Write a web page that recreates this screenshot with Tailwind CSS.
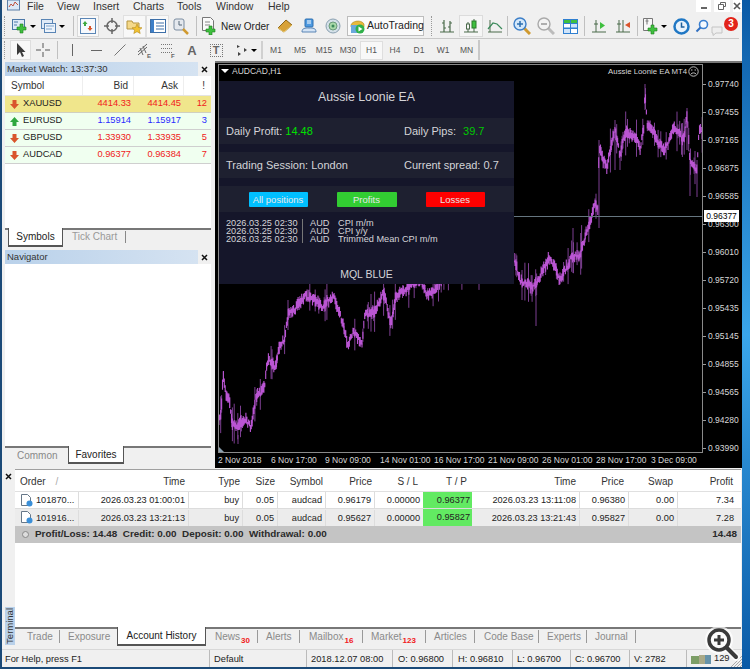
<!DOCTYPE html>
<html lang="en">
<head>
<meta charset="UTF-8">
<title>MetaTrader 4</title>
<script src="https://cdn.jsdelivr.net/npm/@tailwindcss/browser@4"></script>
</head>
<body class="w-[750px] h-[669px] overflow-hidden flex bg-[#0d5ea8] font-['Liberation_Sans',sans-serif] text-[9.500px] text-[#222]">

<!-- Application window -->
<div class="relative w-[742px] h-[669px] border-l-2 border-b-2 border-[#1b4a78] bg-[#f0f0f0] flex flex-col shrink-0">

  <!-- Menu -->
  <div class="h-[14px] flex items-center relative text-[10.500px] leading-[12px] text-[#333]">
    <svg class="ml-[5px] w-[13px] h-[11px] -mt-[3px]" viewBox="0 0 13 11"><rect x=".5" y="0" width="12" height="10" fill="#dbe8f6" stroke="#5b7fa8"/><path d="M2 7l2-3 2 2 2-4 3 3" fill="none" stroke="#c0503c"/></svg>
    <div class="ml-[7px] flex -mt-[3px]">
      <span class="w-[30px]">File</span><span class="w-[36px]">View</span><span class="w-[40px]">Insert</span><span class="w-[44px]">Charts</span><span class="w-[39px]">Tools</span><span class="w-[52px]">Window</span><span>Help</span>
    </div>
    <div class="absolute right-0 top-0 h-[12px] flex gap-[3px]">
      <div class="w-[15px] bg-white flex items-end justify-center pb-[3px]"><div class="w-[6px] h-[2px] bg-[#666]"></div></div>
      <div class="w-[16px] bg-white flex items-center justify-center"><svg class="w-[8px] h-[8px]" viewBox="0 0 8 8"><path d="M2.500 2V.5h5v4H6M.5 2.500h5v5h-5z" fill="none" stroke="#666"/></svg></div>
      <div class="w-[9px] bg-white pl-0 flex items-center"><svg class="w-[8px] h-[8px]" viewBox="0 0 8 8"><path d="M1 1l6 6M7 1L1 7" stroke="#555" stroke-width="1.600"/></svg></div>
    </div>
  </div>

  <!-- Toolbar 1 -->
  <div class="h-[25px] mr-[3px] flex items-center border-b border-[#c8c8c8] text-[10px]">
    <div class="w-[2px] h-[20px] ml-[2px] mr-[4px] border-l border-dotted border-[#999]"></div>
    <div class="w-[20px] flex justify-center"><svg class="w-[16px] h-[16px]" viewBox="0 0 16 16"><rect x=".5" y="1.500" width="12" height="10" fill="#dfeaf7" stroke="#4c78a8"/><path d="M2 4h4M2 7h3" stroke="#4c78a8"/><path d="M8 6h3v3h3v3h-3v3H8v-3H5V9h3z" fill="#3fbf3f" stroke="#1c7f1c" stroke-width=".6"/></svg></div>
    <div class="w-[9px] flex"><div class="border-x-[3px] border-t-[3px] border-x-transparent border-t-black"></div></div>
    <div class="w-[20px] flex justify-center"><svg class="w-[16px] h-[16px]" viewBox="0 0 16 16"><rect x=".5" y="1.500" width="11" height="9" fill="#dfeaf7" stroke="#5a85b5"/><rect x="3.500" y="5.500" width="11" height="9" fill="#eef4fb" stroke="#5a85b5"/><path d="M5 8h8M5 11h6" stroke="#7da3cc"/></svg></div>
    <div class="w-[10px] flex"><div class="border-x-[3px] border-t-[3px] border-x-transparent border-t-black"></div></div>
    <div class="w-[8px] flex justify-center"><div class="w-px h-[20px] bg-[#c0c0c0]"></div></div>
    <div class="w-[22px] h-[22px] flex items-center justify-center bg-[#f8f8f8] border border-[#d8d8d8]"><svg class="w-[16px] h-[16px]" viewBox="0 0 16 16"><rect x=".5" y=".5" width="15" height="15" fill="#f6f9fd" stroke="#5a85b5"/><path d="M5 3l2.500 3H6v2H4V6H2.500z" fill="#3fa83f"/><path d="M10 13l-2.500-3H9V8h2v2h1.500z" fill="#d9552c"/></svg></div>
    <div class="w-[23px] ml-[1px] flex justify-center"><svg class="w-[16px] h-[16px]" viewBox="0 0 16 16"><circle cx="8" cy="8" r="5" fill="none" stroke="#666" stroke-width="1.500"/><path d="M8 0v5M8 11v5M0 8h5M11 8h5" stroke="#666" stroke-width="1.500"/></svg></div>
    <div class="w-[23px] h-[23px] flex items-center justify-center bg-[#f8f8f8] border border-[#e0e0e0]"><svg class="w-[17px] h-[17px]" viewBox="0 0 17 17"><path d="M1 3h5l1 2h6v6H1z" fill="#f5d98a" stroke="#b59540"/><path d="M11 6l1.500 3.500 3.500.3-2.700 2.300.9 3.400-3.200-1.800-3.200 1.800.9-3.400-2.700-2.300 3.500-.3z" fill="#f2c230" stroke="#b58a1c" stroke-width=".6"/></svg></div>
    <div class="w-[23px] h-[23px] flex items-center justify-center bg-[#f8f8f8] border border-[#e0e0e0]"><svg class="w-[16px] h-[16px]" viewBox="0 0 16 16"><rect x=".5" y="1.500" width="15" height="13" fill="#fff" stroke="#3d6fa8"/><rect x="1" y="2" width="3" height="12" fill="#3d7fc8"/><path d="M6 5h8M6 8h8M6 11h8" stroke="#3d6fa8"/></svg></div>
    <div class="w-[24px] flex justify-center"><svg class="w-[18px] h-[18px]" viewBox="0 0 18 18"><rect x="2" y="2" width="10" height="11" rx="2" fill="#e4e8ee" stroke="#7a8ca0"/><path d="M7 4v4h3" stroke="#567" fill="none"/><path d="M11 12l5 5" stroke="#d09a30" stroke-width="2.500"/></svg></div>
    <div class="w-[8px] flex justify-start pl-[3px]"><div class="w-px h-[20px] bg-[#c0c0c0]"></div></div>
    <svg class="w-[17px] h-[18px]" viewBox="0 0 17 18"><path d="M1.500.5h8l3 3v10h-11z" fill="#fafafa" stroke="#777"/><path d="M4 5h5M4 8h5" stroke="#888"/><path d="M8 9h3v3h3v3h-3v3H8v-3H5v-3h3z" fill="#3fbf3f" stroke="#1c7f1c" stroke-width=".6"/></svg>
    <span class="ml-[3px] w-[52px] whitespace-nowrap text-[#222]">New Order</span>
    <div class="w-[24px] flex justify-center"><svg class="w-[16px] h-[14px]" viewBox="0 0 16 14"><path d="M1 9l8-8 6 5-8 7z" fill="#d8a238" stroke="#8c6518"/><path d="M1 9l6 4 8-7" fill="none" stroke="#f1cf74"/></svg></div>
    <div class="w-[24px] flex justify-center"><svg class="w-[16px] h-[16px]" viewBox="0 0 16 16"><rect x="4" y="1" width="8" height="8" rx="1" fill="#4f9ae0" stroke="#2c6fb0"/><path d="M6 3h4M6 5h4" stroke="#fff"/><path d="M1 14c0-4 3-4 7-4s7 0 7 4z" fill="#d4e4f6" stroke="#5a85b5"/></svg></div>
    <div class="w-[24px] flex justify-center"><svg class="w-[16px] h-[16px]" viewBox="0 0 16 16"><circle cx="8" cy="8" r="7" fill="#d4e0e8" stroke="#8aa0b0"/><circle cx="8" cy="8" r="4" fill="#a8d8a8" stroke="#6a9a7a"/><circle cx="8" cy="8" r="1.500" fill="#3c8a5a"/></svg></div>
    <div class="w-[77px] h-[20px] ml-[2px] flex items-center border border-[#bdbdbd] bg-[#fbfbfb]">
      <svg class="w-[15px] h-[15px] ml-[2px] shrink-0" viewBox="0 0 15 15"><path d="M1 6c1-4 10-6 13-1v3H1z" fill="#e8b93c" stroke="#a98420" stroke-width=".6"/><rect x="1" y="6" width="11" height="8" fill="#6aa8dc"/><circle cx="10" cy="10" r="4.500" fill="#2fb04a"/><path d="M8.500 7.500l4 2.500-4 2.500z" fill="#fff"/></svg>
      <span class="ml-[2px] whitespace-nowrap text-[#222] text-[10.500px]">AutoTrading</span>
    </div>
    <div class="w-[2px] h-[20px] ml-[7px] mr-[2px] border-l border-dotted border-[#999]"></div>
    <div class="w-[24px] flex justify-center"><svg class="w-[16px] h-[16px]" viewBox="0 0 16 16"><path d="M1 14h14M5 2v12M3 5h2M5 10h2M11 3v11M9 9h2M11 5h2" stroke="#4a6a4a" fill="none" stroke-width="1.200"/></svg></div>
    <div class="w-[24px] h-[22px] flex items-center justify-center bg-[#f6f6f6] border border-[#dcdcdc]"><svg class="w-[16px] h-[16px]" viewBox="0 0 16 16"><path d="M1 14h14M5 4v10M11 1v13" stroke="#4a6a4a"/><rect x="3.500" y="6" width="3" height="5" fill="#f5f5f5" stroke="#4a6a4a"/><rect x="9" y="3" width="4" height="7" fill="#3fbf3f" stroke="#2a7a2a"/></svg></div>
    <div class="w-[24px] flex justify-center"><svg class="w-[16px] h-[16px]" viewBox="0 0 16 16"><path d="M1 14h14M3 2v12" stroke="#4a6a4a"/><path d="M1 11l5-6 4 1 5 5" fill="none" stroke="#3a8a5a" stroke-width="1.200"/></svg></div>
    <div class="w-[3px] flex"><div class="w-px h-[20px] bg-[#c0c0c0]"></div></div>
    <div class="w-[24px] flex justify-center"><svg class="w-[18px] h-[18px]" viewBox="0 0 18 18"><path d="M11 11l6 6" stroke="#d09a30" stroke-width="3"/><circle cx="7" cy="7" r="6" fill="#d4e8fa" stroke="#3d7fc8" stroke-width="1.400"/><path d="M4 7h6M7 4v6" stroke="#2c6fb0" stroke-width="1.500"/></svg></div>
    <div class="w-[24px] flex justify-center"><svg class="w-[18px] h-[18px]" viewBox="0 0 18 18"><path d="M11 11l6 6" stroke="#bbb" stroke-width="3"/><circle cx="7" cy="7" r="6" fill="#f4f4f4" stroke="#aaa" stroke-width="1.400"/><path d="M4 7h6" stroke="#999" stroke-width="1.500"/></svg></div>
    <div class="w-[24px] flex justify-center"><svg class="w-[15px] h-[15px]" viewBox="0 0 15 15"><rect width="15" height="15" fill="#2f7fd0"/><rect x="1" y="1" width="6" height="3" fill="#3fbf3f"/><rect x="8" y="1" width="6" height="3" fill="#3fbf3f"/><rect x="1" y="5" width="6" height="3.500" fill="#fff"/><rect x="8" y="5" width="6" height="3.500" fill="#cfe4fa"/><rect x="1" y="10" width="6" height="4" fill="#cfe4fa"/><rect x="8" y="10" width="6" height="4" fill="#fff"/></svg></div>
    <div class="w-[5px] flex justify-center"><div class="w-px h-[20px] bg-[#c0c0c0]"></div></div>
    <div class="w-[24px] flex justify-center"><svg class="w-[16px] h-[16px]" viewBox="0 0 16 16"><path d="M1 14h14M5 2v12M3 6h4" stroke="#4a6a4a"/><path d="M9 4l5 3.500L9 11z" fill="#3fbf3f"/></svg></div>
    <div class="w-[24px] flex justify-center"><svg class="w-[16px] h-[16px]" viewBox="0 0 16 16"><path d="M1 14h14M4 2v12M8 2v12M2 6h4" stroke="#4a6a4a"/><path d="M15 4v6l-5-3z" fill="#d9552c"/></svg></div>
    <div class="w-[5px] flex justify-center"><div class="w-px h-[20px] bg-[#c0c0c0]"></div></div>
    <div class="w-[21px] flex justify-center"><svg class="w-[17px] h-[18px]" viewBox="0 0 17 18"><path d="M1.500 1.500h9v12h-9z" fill="#f8f8f8" stroke="#777"/><path d="M5 1.500v6M3.500 4h3" stroke="#777"/><path d="M9 8h3v3h3v3h-3v3H9v-3H6v-3h3z" fill="#3fbf3f" stroke="#1c7f1c" stroke-width=".6"/></svg></div>
    <div class="w-[8px] flex"><div class="border-x-[3px] border-t-[3px] border-x-transparent border-t-black"></div></div>
    <div class="w-[24px] flex justify-center"><svg class="w-[17px] h-[17px]" viewBox="0 0 17 17"><circle cx="8.500" cy="8.500" r="7" fill="#e8f2fb" stroke="#1f77c4" stroke-width="2.500"/><path d="M8.500 4.500v4.500h3" fill="none" stroke="#1f5f9a" stroke-width="1.500"/></svg></div>
    <div class="w-[18px] flex justify-center"><svg class="w-[14px] h-[14px]" viewBox="0 0 14 14"><circle cx="8.500" cy="5.500" r="4" fill="#f4f9ff" stroke="#3a7fd0" stroke-width="1.600"/><path d="M5.500 8.500l-4 4" stroke="#2f6fc0" stroke-width="2"/></svg></div>
    <div class="w-[28px] relative flex justify-end pr-[1px] h-[20px]">
      <svg class="absolute left-0 bottom-0 w-[12px] h-[10px]" viewBox="0 0 12 10"><path d="M1 1h10v6H5L2 9.500V7H1z" fill="#eee" stroke="#c4c4c4"/></svg>
      <div class="w-[14px] h-[14px] mt-[1px] rounded-full bg-[#e2231a] text-white text-[10px] font-bold leading-[14px] text-center">3</div>
    </div>
  </div>

  <!-- Toolbar 2 -->
  <div class="h-[22px] flex items-center text-[#555]">
    <div class="w-[2px] h-[18px] ml-[2px] mr-[4px] border-l border-dotted border-[#999]"></div>
    <div class="w-[21px] h-[20px] flex items-center justify-center bg-[#f8f8f8] border border-[#dedede]"><svg class="w-[11px] h-[14px]" viewBox="0 0 11 14"><path d="M2 0v12l3-3 2 5 2-1-2-4h3.500z" fill="#3a3a3a"/></svg></div>
    <div class="w-[24px] flex justify-center"><svg class="w-[14px] h-[14px]" viewBox="0 0 14 14"><path d="M7 0v5M7 9v5M0 7h5M9 7h5" stroke="#555"/></svg></div>
    <div class="w-[5px] flex justify-center"><div class="w-px h-[18px] bg-[#c0c0c0]"></div></div>
    <div class="w-[24px] flex justify-center"><div class="w-px h-[12px] bg-[#666]"></div></div>
    <div class="w-[24px] flex justify-center"><div class="w-[11px] h-px bg-[#666]"></div></div>
    <div class="w-[24px] flex justify-center"><svg class="w-[12px] h-[12px]" viewBox="0 0 12 12"><path d="M.5 11.500l11-11" stroke="#777"/></svg></div>
    <div class="w-[24px] flex justify-center"><svg class="w-[15px] h-[15px]" viewBox="0 0 15 15"><path d="M1 9l9-8M1 12l9-8M3 5l3 7M6 3l3 7" stroke="#666" fill="none"/><text x="10" y="14.500" font-size="6" font-weight="700" fill="#666" font-family="Liberation Sans">E</text></svg></div>
    <div class="w-[24px] flex justify-center"><svg class="w-[15px] h-[15px]" viewBox="0 0 15 15"><path d="M0 1.500h12M0 5.500h12M0 9.500h12" stroke="#777" stroke-dasharray="1 1"/><text x="10" y="15" font-size="6" font-weight="700" fill="#666" font-family="Liberation Sans">F</text></svg></div>
    <div class="w-[24px] text-center text-[13px] font-bold text-[#666] leading-none">A</div>
    <div class="w-[24px] flex justify-center"><div class="w-[13px] h-[13px] border border-dotted border-[#777] text-center text-[11px] font-bold leading-[11px] text-[#666]">T</div></div>
    <div class="w-[30px] flex items-center pl-[8px]"><svg class="w-[13px] h-[12px]" viewBox="0 0 13 12"><path d="M1 1l3 1.500L1 4zM8 4l3 2-3 2zM2 8l3 2-3 2z" fill="#444"/></svg><div class="ml-[2px] border-x-[3px] border-t-[3px] border-x-transparent border-t-black"></div></div>
    <div class="w-[6px] flex"><div class="w-[2px] h-[18px] ml-[3px] bg-[#d0d0d0]"></div></div>
    <div class="flex text-[8.500px] text-center items-center">
      <span class="w-[24px]">M1</span><span class="w-[24px]">M5</span><span class="w-[24px]">M15</span><span class="w-[24px]">M30</span><span class="w-[23px] h-[19px] leading-[17px] bg-[#f8f8f8] border border-[#dedede]">H1</span><span class="w-[24px]">H4</span><span class="w-[24px]">D1</span><span class="w-[24px]">W1</span><span class="w-[23px]">MN</span>
    </div>
    <div class="w-[2px] h-[20px] bg-[#c8c8c8]"></div>
  </div>

  <!-- Middle: side panels and chart -->
  <div class="h-[407px] flex">
    <div class="w-[213px] pl-[3px] pr-[4px] pt-[1px] flex flex-col">

      <!-- Market Watch -->
      <div class="h-[183px] flex flex-col">
        <div class="h-[14px] flex items-center pl-[2px] bg-gradient-to-r from-[#b9d1ea] to-[#d7e4f2] text-[#333] leading-none">
          <span>Market Watch: 13:37:30</span>
          <div class="ml-auto w-[13px] h-full bg-[#f0f0f0] flex items-center justify-center"><svg class="w-[7px] h-[7px]" viewBox="0 0 7 7"><path d="M1 1l5 5M6 1L1 6" stroke="#111" stroke-width="1.500"/></svg></div>
        </div>
        <div class="h-[152px] bg-white text-[9.300px]">
          <div class="h-[20px] grid grid-cols-[78px_51px_50px_27px] items-center border-b border-[#e4e4e4] text-[10px] text-[#333]">
            <div class="pl-[6px] h-full leading-[19px] border-r border-[#eee]">Symbol</div><div class="text-right pr-[5px] h-full leading-[19px] border-r border-[#eee]">Bid</div><div class="text-right pr-[5px] h-full leading-[19px] border-r border-[#eee]">Ask</div><div class="text-right pr-[6px]">!</div>
          </div>
          <div class="h-[17px] grid grid-cols-[78px_51px_50px_27px] items-center bg-[#f0e68c] border-b border-[#d0d0c0] text-[#f02020]">
            <div class="flex items-center pl-[5px] text-[#222]"><svg class="w-[9px] h-[9px] mr-[4px]" viewBox="0 0 9 9"><path d="M2.500 0h4v4H9L4.500 9 0 4h2.500z" fill="#d9552c"/></svg>XAUUSD</div><div class="text-right pr-[3px]">4414.33</div><div class="text-right pr-[3px]">4414.45</div><div class="text-right pr-[4px]">12</div>
          </div>
          <div class="h-[17px] grid grid-cols-[78px_51px_50px_27px] items-center bg-[#f0fff0] border-b border-[#cfcfcf] text-[#2a2aff]">
            <div class="flex items-center pl-[5px] text-[#222]"><svg class="w-[9px] h-[9px] mr-[4px]" viewBox="0 0 9 9"><path d="M2.500 9h4V5H9L4.500 0 0 5h2.500z" fill="#2fa83f"/></svg>EURUSD</div><div class="text-right pr-[3px]">1.15914</div><div class="text-right pr-[3px]">1.15917</div><div class="text-right pr-[4px]">3</div>
          </div>
          <div class="h-[17px] grid grid-cols-[78px_51px_50px_27px] items-center bg-[#f0fff0] border-b border-[#cfcfcf] text-[#f02020]">
            <div class="flex items-center pl-[5px] text-[#222]"><svg class="w-[9px] h-[9px] mr-[4px]" viewBox="0 0 9 9"><path d="M2.500 0h4v4H9L4.500 9 0 4h2.500z" fill="#d9552c"/></svg>GBPUSD</div><div class="text-right pr-[3px]">1.33930</div><div class="text-right pr-[3px]">1.33935</div><div class="text-right pr-[4px]">5</div>
          </div>
          <div class="h-[17px] grid grid-cols-[78px_51px_50px_27px] items-center bg-[#f0fff0] border-b border-[#cfcfcf] text-[#f02020]">
            <div class="flex items-center pl-[5px] text-[#222]"><svg class="w-[9px] h-[9px] mr-[4px]" viewBox="0 0 9 9"><path d="M2.500 0h4v4H9L4.500 9 0 4h2.500z" fill="#d9552c"/></svg>AUDCAD</div><div class="text-right pr-[3px]">0.96377</div><div class="text-right pr-[3px]">0.96384</div><div class="text-right pr-[4px]">7</div>
          </div>
        </div>
        <div class="h-[17px] flex border-t-2 border-[#777] text-[10px] text-[#888]">
          <div class="w-[55px] ml-[3px] -mt-[2px] h-[19px] bg-white border-x border-b-2 border-[#555] text-[#222] text-center leading-[17px]">Symbols</div>
          <div class="ml-[9px] pr-[8px] border-r border-[#888] my-[1px] leading-[12px] h-[12px] text-[#999]">Tick Chart</div>
        </div>
      </div>

      <!-- Navigator -->
      <div class="mt-[5px] h-[14px] flex items-center pl-[2px] bg-gradient-to-r from-[#b9d1ea] to-[#d7e4f2] text-[#333] leading-none">
        <span>Navigator</span>
        <div class="ml-auto w-[13px] h-full bg-[#f0f0f0] flex items-center justify-center"><svg class="w-[7px] h-[7px]" viewBox="0 0 7 7"><path d="M1 1l5 5M6 1L1 6" stroke="#111" stroke-width="1.500"/></svg></div>
      </div>
      <div class="h-[182px] bg-white"></div>
      <div class="h-[17px] flex border-t-2 border-[#777] text-[10px]">
        <div class="w-[63px] pl-[12px] text-[#888] leading-[15px]">Common</div>
        <div class="w-[56px] -mt-[2px] h-[18px] bg-white border-x border-b-2 border-[#555] text-[#222] text-center leading-[17px]">Favorites</div>
      </div>
    </div>

    <!-- Chart window -->
    <div class="w-[527px] h-[407px] bg-black border-t-2 border-[#777] pl-[3px] pt-[1px] relative text-[8.500px] text-[#d8d8d8] leading-none">
      <div class="flex">
        <div id="plot" class="relative w-[485px] h-[389px] border border-[#8a8a8a] overflow-hidden">
          <svg id="chartSvg" class="absolute left-0 top-0 w-full h-full" viewBox="219 65 483 387"></svg>
          <div class="absolute left-0 right-0 top-[151px] h-px bg-[#65757f]"></div>
          <div class="absolute left-[2px] top-[2px] flex items-center gap-[3px]"><div class="border-x-[4px] border-t-[4px] border-x-transparent border-t-white"></div><span>AUDCAD,H1</span></div>
          <div class="absolute right-[3px] top-[1px] flex items-center text-[7.800px] gap-[1px]"><span>Aussie Loonie EA MT4</span><svg class="w-[11px] h-[11px]" viewBox="0 0 11 11"><circle cx="5.500" cy="5.500" r="4.700" fill="none" stroke="#bbb"/><circle cx="3.800" cy="4" r=".7" fill="#bbb"/><circle cx="7.200" cy="4" r=".7" fill="#bbb"/><path d="M3 8c1-1.500 4-1.500 5 0" fill="none" stroke="#bbb"/></svg></div>

          <!-- EA dashboard -->
          <div class="absolute left-0 top-[16px] w-[295px] h-[203px] bg-[#15162a] flex flex-col text-[11px] text-[#d4d4d8]">
            <div class="h-[37px] pb-[4px] flex items-center justify-center text-[12.300px]">Aussie Loonie EA</div>
            <div class="h-[26px] flex items-center bg-[#1e2030]">
              <span class="ml-[7px] w-[178px]">Daily Profit: <span class="text-[#00e000]">14.48</span></span>
              <span>Daily Pips: <span class="ml-[4px] text-[#00c800]">39.7</span></span>
            </div>
            <div class="mt-[8px] h-[26px] flex items-center bg-[#1e2030]">
              <span class="ml-[7px] w-[178px]">Trading Session: London</span>
              <span>Current spread: 0.7</span>
            </div>
            <div class="mt-[8px] h-[26px] flex items-center justify-center gap-[29px] bg-[#1e2030] text-[9.500px] text-[#e8e8e8] text-center">
              <div class="w-[59px] h-[15px] leading-[15px] rounded-[1px] bg-[#00bfff]">All positions</div>
              <div class="w-[60px] h-[15px] leading-[15px] rounded-[1px] bg-[#32cd32]">Profits</div>
              <div class="w-[59px] h-[15px] leading-[15px] rounded-[1px] bg-[#ff0000]">Losses</div>
            </div>
            <div class="mt-[7px] ml-[7px] grid grid-cols-[77px_35px_auto] text-[9.200px] leading-[8px] whitespace-nowrap">
              <div class="border-r border-[#777]"><div>2026.03.25 02:30</div><div>2026.03.25 02:30</div><div>2026.03.25 02:30</div></div>
              <div class="pl-[7px]"><div>AUD</div><div>AUD</div><div>AUD</div></div>
              <div><div>CPI m/m</div><div>CPI y/y</div><div>Trimmed Mean CPI m/m</div></div>
            </div>
            <div class="mt-auto h-[15px] text-center text-[10.500px]">MQL BLUE</div>
          </div>
          <!-- corner marker -->
          <div class="absolute left-0 bottom-0 border-r-[5px] border-b-[5px] border-r-transparent border-b-[#8aa0b0]"></div>
        </div>

        <!-- Price axis -->
        <div class="relative w-[39px] h-[389px]">
          <div class="flex flex-col pt-[6px]">
            <div class="h-[28px] flex items-center"><span class="w-[3px] h-px bg-[#999] mr-[2px]"></span>0.97740</div>
            <div class="h-[28px] flex items-center"><span class="w-[3px] h-px bg-[#999] mr-[2px]"></span>0.97455</div>
            <div class="h-[28px] flex items-center"><span class="w-[3px] h-px bg-[#999] mr-[2px]"></span>0.97165</div>
            <div class="h-[28px] flex items-center"><span class="w-[3px] h-px bg-[#999] mr-[2px]"></span>0.96875</div>
            <div class="h-[28px] flex items-center"><span class="w-[3px] h-px bg-[#999] mr-[2px]"></span>0.96585</div>
            <div class="h-[28px] flex items-center"><span class="w-[3px] h-px bg-[#999] mr-[2px]"></span>0.96300</div>
            <div class="h-[28px] flex items-center"><span class="w-[3px] h-px bg-[#999] mr-[2px]"></span>0.96010</div>
            <div class="h-[28px] flex items-center"><span class="w-[3px] h-px bg-[#999] mr-[2px]"></span>0.95720</div>
            <div class="h-[28px] flex items-center"><span class="w-[3px] h-px bg-[#999] mr-[2px]"></span>0.95435</div>
            <div class="h-[28px] flex items-center"><span class="w-[3px] h-px bg-[#999] mr-[2px]"></span>0.95145</div>
            <div class="h-[28px] flex items-center"><span class="w-[3px] h-px bg-[#999] mr-[2px]"></span>0.94855</div>
            <div class="h-[28px] flex items-center"><span class="w-[3px] h-px bg-[#999] mr-[2px]"></span>0.94565</div>
            <div class="h-[28px] flex items-center"><span class="w-[3px] h-px bg-[#999] mr-[2px]"></span>0.94280</div>
            <div class="h-[28px] flex items-center"><span class="w-[3px] h-px bg-[#999] mr-[2px]"></span>0.93990</div>
          </div>
          <div class="absolute left-[1px] top-[146px] w-[35px] h-[12px] bg-white text-black text-center leading-[12px]">0.96377</div>
        </div>
      </div>
      <!-- Time axis -->
      <div class="grid grid-cols-[53px_54px_55px_54px_54px_54px_54px_55px_54px] h-[14px] pt-[3px] whitespace-nowrap">
        <span>2 Nov 2018</span><span>6 Nov 17:00</span><span>9 Nov 09:00</span><span>14 Nov 01:00</span><span>16 Nov 17:00</span><span>21 Nov 09:00</span><span>26 Nov 01:00</span><span>28 Nov 17:00</span><span>3 Dec 09:00</span>
      </div>
    </div>
  </div>

  <!-- Terminal -->
  <div class="h-[180px] flex mt-[1px]">
    <div class="w-[13px] pl-[3px] flex flex-col">
      <svg class="w-[7px] h-[7px] mt-[4px]" viewBox="0 0 7 7"><path d="M1 1l5 5M6 1L1 6" stroke="#111" stroke-width="1.500"/></svg>
      <div class="mt-auto mb-[4px] w-[10px] h-[38px] bg-[#b9d1ea] text-[#333] flex items-center justify-center">
        <span class="[writing-mode:vertical-rl] rotate-180 text-[9.500px] leading-none">Terminal</span>
      </div>
    </div>
    <div class="w-[726px] flex flex-col">
      <div class="h-[158px] pt-[2px] bg-white border-t border-[#a0a0a0] text-[9.200px]">
        <div class="h-[20px] grid grid-cols-[64px_110px_54px_35px_48px_49px_48px_49px_108px_49px_49px_60px] items-center text-right text-[10px] text-[#333] border-b border-[#e0e0e0]">
          <div class="text-left pl-[5px] flex">Order<span class="ml-[10px] text-[#aaa]">/</span></div><div class="pr-[4px]">Time</div><div class="pr-[3px]">Type</div><div class="pr-[3px]">Size</div><div class="pr-[3px]">Symbol</div><div class="pr-[3px]">Price</div><div class="pr-[5px]">S / L</div><div class="pr-[5px]">T / P</div><div class="pr-[4px]">Time</div><div class="pr-[5px]">Price</div><div class="pr-[5px]">Swap</div><div class="pr-[5px]">Profit</div>
        </div>
        <div class="h-[17px] grid grid-cols-[64px_110px_54px_35px_48px_49px_48px_49px_108px_49px_49px_60px] items-center text-right border-b border-[#dcdcdc] leading-[16px]">
          <div class="text-left pl-[5px] flex items-center gap-[3px] border-r border-[#ddd]"><svg class="w-[13px] h-[13px]" viewBox="0 0 13 13"><path d="M1.500.5h6l3 3v8h-9z" fill="#fff" stroke="#678"/><circle cx="9.500" cy="9.500" r="3" fill="#3a8fd8"/></svg>101870...</div><div class="pr-[3px] border-r border-[#ddd]">2026.03.23 01:00:01</div><div class="pr-[3px] border-r border-[#ddd]">buy</div><div class="pr-[3px] border-r border-[#ddd]">0.05</div><div class="pr-[3px] border-r border-[#ddd]">audcad</div><div class="pr-[3px] border-r border-[#ddd]">0.96179</div><div class="pr-[3px]">0.00000</div><div class="pr-[2px] h-full bg-[#62ea62]">0.96377</div><div class="pr-[3px] border-r border-[#ddd]">2026.03.23 13:11:08</div><div class="pr-[3px] border-r border-[#ddd]">0.96380</div><div class="pr-[3px] border-r border-[#ddd]">0.00</div><div class="pr-[4px]">7.34</div>
        </div>
        <div class="h-[17px] grid grid-cols-[64px_110px_54px_35px_48px_49px_48px_49px_108px_49px_49px_60px] items-center text-right bg-[#ececec] leading-[16px]">
          <div class="text-left pl-[5px] flex items-center gap-[3px] border-r border-[#ddd]"><svg class="w-[13px] h-[13px]" viewBox="0 0 13 13"><path d="M1.500.5h6l3 3v8h-9z" fill="#fff" stroke="#678"/><circle cx="9.500" cy="9.500" r="3" fill="#3a8fd8"/></svg>101916...</div><div class="pr-[3px] border-r border-[#ddd]">2026.03.23 13:21:13</div><div class="pr-[3px] border-r border-[#ddd]">buy</div><div class="pr-[3px] border-r border-[#ddd]">0.05</div><div class="pr-[3px] border-r border-[#ddd]">audcad</div><div class="pr-[3px] border-r border-[#ddd]">0.95627</div><div class="pr-[3px]">0.00000</div><div class="pr-[2px] h-full bg-[#62ea62]">0.95827</div><div class="pr-[3px] border-r border-[#ddd]">2026.03.23 13:21:43</div><div class="pr-[3px] border-r border-[#ddd]">0.95827</div><div class="pr-[3px] border-r border-[#ddd]">0.00</div><div class="pr-[4px]">7.28</div>
        </div>
        <div class="h-[17px] flex items-center bg-[#c4c4c4] font-bold text-[9.900px] text-[#2a2a2a] pl-[7px] pr-[4px]">
          <svg class="w-[7px] h-[7px] mr-[6px]" viewBox="0 0 7 7"><circle cx="3.500" cy="3.500" r="3" fill="#ddd" stroke="#888"/></svg>
          <span>Profit/Loss: 14.48&nbsp; Credit: 0.00&nbsp; Deposit: 0.00&nbsp; Withdrawal: 0.00</span>
          <span class="ml-auto">14.48</span>
        </div>
      </div>
      <!-- Terminal tabs -->
      <div class="h-[20px] flex border-t-2 border-[#777] text-[10px] leading-[13px] text-[#8a8a8a] whitespace-nowrap">
        <div class="w-[45px] pl-[12px] mt-[1px] h-[13px] border-r border-[#999]">Trade</div>
        <div class="w-[57px] pl-[8px] mt-[1px] h-[13px]">Exposure</div>
        <div class="w-[89px] -mt-[2px] h-[19px] bg-white border-x border-b-2 border-[#555] text-[#222] text-center leading-[17px]">Account History</div>
        <div class="w-[52px] pl-[9px] mt-[1px] h-[13px] border-r border-[#999]">News<span class="ml-[1px] relative top-[3px] text-[8px] text-[#f02020] font-bold">30</span></div>
        <div class="w-[42px] pl-[8px] mt-[1px] h-[13px] border-r border-[#999]">Alerts</div>
        <div class="w-[63px] pl-[9px] mt-[1px] h-[13px] border-r border-[#999]">Mailbox<span class="ml-[1px] relative top-[3px] text-[8px] text-[#f02020] font-bold">16</span></div>
        <div class="w-[63px] pl-[8px] mt-[1px] h-[13px] border-r border-[#999]">Market<span class="ml-[1px] relative top-[3px] text-[8px] text-[#f02020] font-bold">123</span></div>
        <div class="w-[49px] pl-[8px] mt-[1px] h-[13px] border-r border-[#999]">Articles</div>
        <div class="w-[64px] pl-[9px] mt-[1px] h-[13px] border-r border-[#999]">Code Base</div>
        <div class="w-[48px] pl-[8px] mt-[1px] h-[13px] border-r border-[#999]">Experts</div>
        <div class="w-[49px] pl-[8px] mt-[1px] h-[13px] border-r border-[#999]">Journal</div>
      </div>
    </div>
  </div>

  <!-- Status bar -->
  <div class="h-[18px] flex items-center border-t border-[#d8d8d8] whitespace-nowrap text-[9.300px]">
    <div class="w-[208px] pl-[3px] border-r border-[#bbb] h-full leading-[18px]">For Help, press F1</div>
    <div class="w-[97px] pl-[4px] border-r border-[#bbb] h-full leading-[18px]">Default</div>
    <div class="w-[86px] pl-[4px] border-r border-[#bbb] h-full leading-[18px]">2018.12.07 08:00</div>
    <div class="w-[60px] pl-[5px] border-r border-[#bbb] h-full leading-[18px]">O: 0.96800</div>
    <div class="w-[60px] pl-[5px] border-r border-[#bbb] h-full leading-[18px]">H: 0.96810</div>
    <div class="w-[58px] pl-[4px] border-r border-[#bbb] h-full leading-[18px]">L: 0.96700</div>
    <div class="w-[59px] pl-[4px] border-r border-[#bbb] h-full leading-[18px]">C: 0.96700</div>
    <div class="w-[57px] pl-[4px] border-r border-[#bbb] h-full leading-[18px]">V: 2782</div>
    <div class="flex-1 flex items-center pl-[4px] overflow-hidden h-full">
      <svg class="w-[20px] h-[11px] shrink-0" viewBox="0 0 20 11"><path d="M1 11V3M3 11V3M5 11V3M7 11V3" stroke="#4a7a2a" stroke-width="1.400"/><path d="M9 11V2M11 11V2M13 11V2" stroke="#8a8a5a" stroke-width="1.400"/><path d="M15 11V2M17 11V2M19 11V2" stroke="#2a6a8a" stroke-width="1.400"/></svg>
      <span class="ml-[3px] shrink-0">129</span>
    </div>
  </div>

  <!-- resize grip -->
  <svg class="absolute right-0 bottom-0 w-[12px] h-[12px]" viewBox="0 0 12 12"><path d="M12 1L1 12M12 4l-8 8M12 7l-5 5M12 10l-2 2" stroke="#aaa"/></svg>
  <!-- zoom cursor overlay -->
  <svg class="absolute left-[702px] top-[625px] w-[36px] h-[36px]" viewBox="0 0 36 36">
    <path d="M22 22l11 11" stroke="#fff" stroke-width="7" stroke-linecap="round" stroke-opacity=".7"/>
    <circle cx="15" cy="15" r="11" fill="#fff" fill-opacity=".7" stroke="#fff" stroke-opacity=".7" stroke-width="6"/>
    <path d="M23 23l9 9" stroke="#3a3a3a" stroke-width="4" stroke-linecap="round"/>
    <circle cx="15" cy="15" r="10" fill="none" stroke="#3a3a3a" stroke-width="3.500"/>
    <path d="M10 15h10M15 10v10" stroke="#3a3a3a" stroke-width="3"/>
  </svg>
</div>

<!-- Desktop behind the window -->
<div class="flex-1 h-[669px] bg-gradient-to-b from-[#0a5aa6] via-[#3aa6ea] to-[#0a5aa6]"></div>

<script>
  // price path in page coordinates, filled out with seeded noise
  const pts = [[218,420],[221,415],[223,375],[226,395],[229,399],[232,423],[239,425],[246,420],[251,428],[256,396],[264,389],[268,358],[275,368],[280,345],[285,338],[288,314],[295,309],[305,296],[314,299],[322,307],[334,296],[341,317],[348,345],[353,331],[362,344],[365,314],[375,311],[384,292],[391,326],[396,296],[420,280],[428,296],[450,270],[471,275],[490,262],[514,258],[520,280],[533,287],[538,281],[543,270],[550,257],[556,270],[560,280],[566,268],[572,257],[580,255],[587,230],[592,215],[595,205],[598,212],[599,145],[603,160],[607,167],[611,145],[615,130],[620,155],[625,133],[637,137],[640,150],[644,125],[645,88],[647,123],[652,130],[657,140],[663,150],[668,145],[673,127],[680,135],[684,140],[687,115],[690,160],[697,170],[699,128],[703,135]];
  const wicks = [[599,140,228],[536,290,326],[573,228,273],[690,150,196],[697,160,197],[687,108,150],[461,265,284],[288,300,330],[238,435,444],[522,270,300],[645,84,110],[615,120,170],[620,150,170]];
  let seed = 4711;
  const rnd = () => (seed = (seed * 16807) % 2147483647) / 2147483647;
  const yAt = x => {
    for (let i = 1; i < pts.length; i++) {
      if (x <= pts[i][0]) {
        const [a, b] = [pts[i - 1], pts[i]];
        return a[1] + (b[1] - a[1]) * (x - a[0]) / (b[0] - a[0]);
      }
    }
    return pts[pts.length - 1][1];
  };
  let body = '', wick = '';
  for (let x = 218; x <= 703; x += 0.9) {
    const y = yAt(x) + (rnd() - 0.5) * 5;
    const h = 2 + rnd() * 4;
    body += `M${x.toFixed(1)} ${(y - h).toFixed(1)}V${(y + h).toFixed(1)}`;
    const w = Math.pow(rnd(), 6) * 22;
    wick += `M${x.toFixed(1)} ${(y - w).toFixed(1)}V${(y + w).toFixed(1)}`;
  }
  wicks.forEach(w => { wick += `M${w[0]} ${w[1]}V${w[2]}`; });
  document.getElementById('chartSvg').innerHTML =
    `<path d="${wick}" stroke="#7d3f92" stroke-width="1" fill="none"/><path d="${body}" stroke="#ba55d3" stroke-width="1.100" fill="none"/>`;
</script>
</body>
</html>
